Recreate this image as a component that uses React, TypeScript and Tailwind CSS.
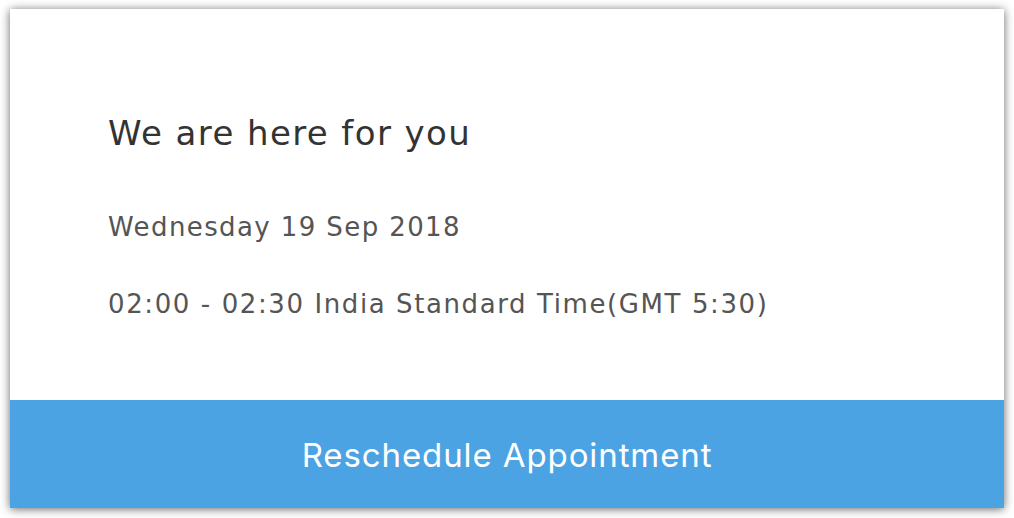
export default function App() {
  return (
    <div className="w-[1014px] h-[518px] bg-white pt-[9px] pl-[10px]">
      <div className="w-[994px] h-[499px] flex flex-col bg-white shadow-[0_1px_9px_rgba(0,0,0,0.6)]">
        <div className="h-[391px] pl-[98px] pt-[104px] font-['DejaVu_Sans',sans-serif]">
          <h1 className="text-[34px] leading-[40px] tracking-[1.4px] text-[#333333]">We are here for you</h1>
          <p className="mt-[59px] text-[26px] leading-[30px] tracking-[1.4px] text-[#555555]">Wednesday 19 Sep 2018</p>
          <p className="mt-[47px] text-[26px] leading-[30px] tracking-[1.6px] text-[#555555]">02:00 - 02:30 India Standard Time(GMT 5:30)</p>
        </div>
        <button className="h-[108px] w-full pt-[4px] bg-[#4ca3e3] text-white text-[33px] tracking-[0.9px] font-['Inter',sans-serif]">
          Reschedule Appointment
        </button>
      </div>
    </div>
  )
}
